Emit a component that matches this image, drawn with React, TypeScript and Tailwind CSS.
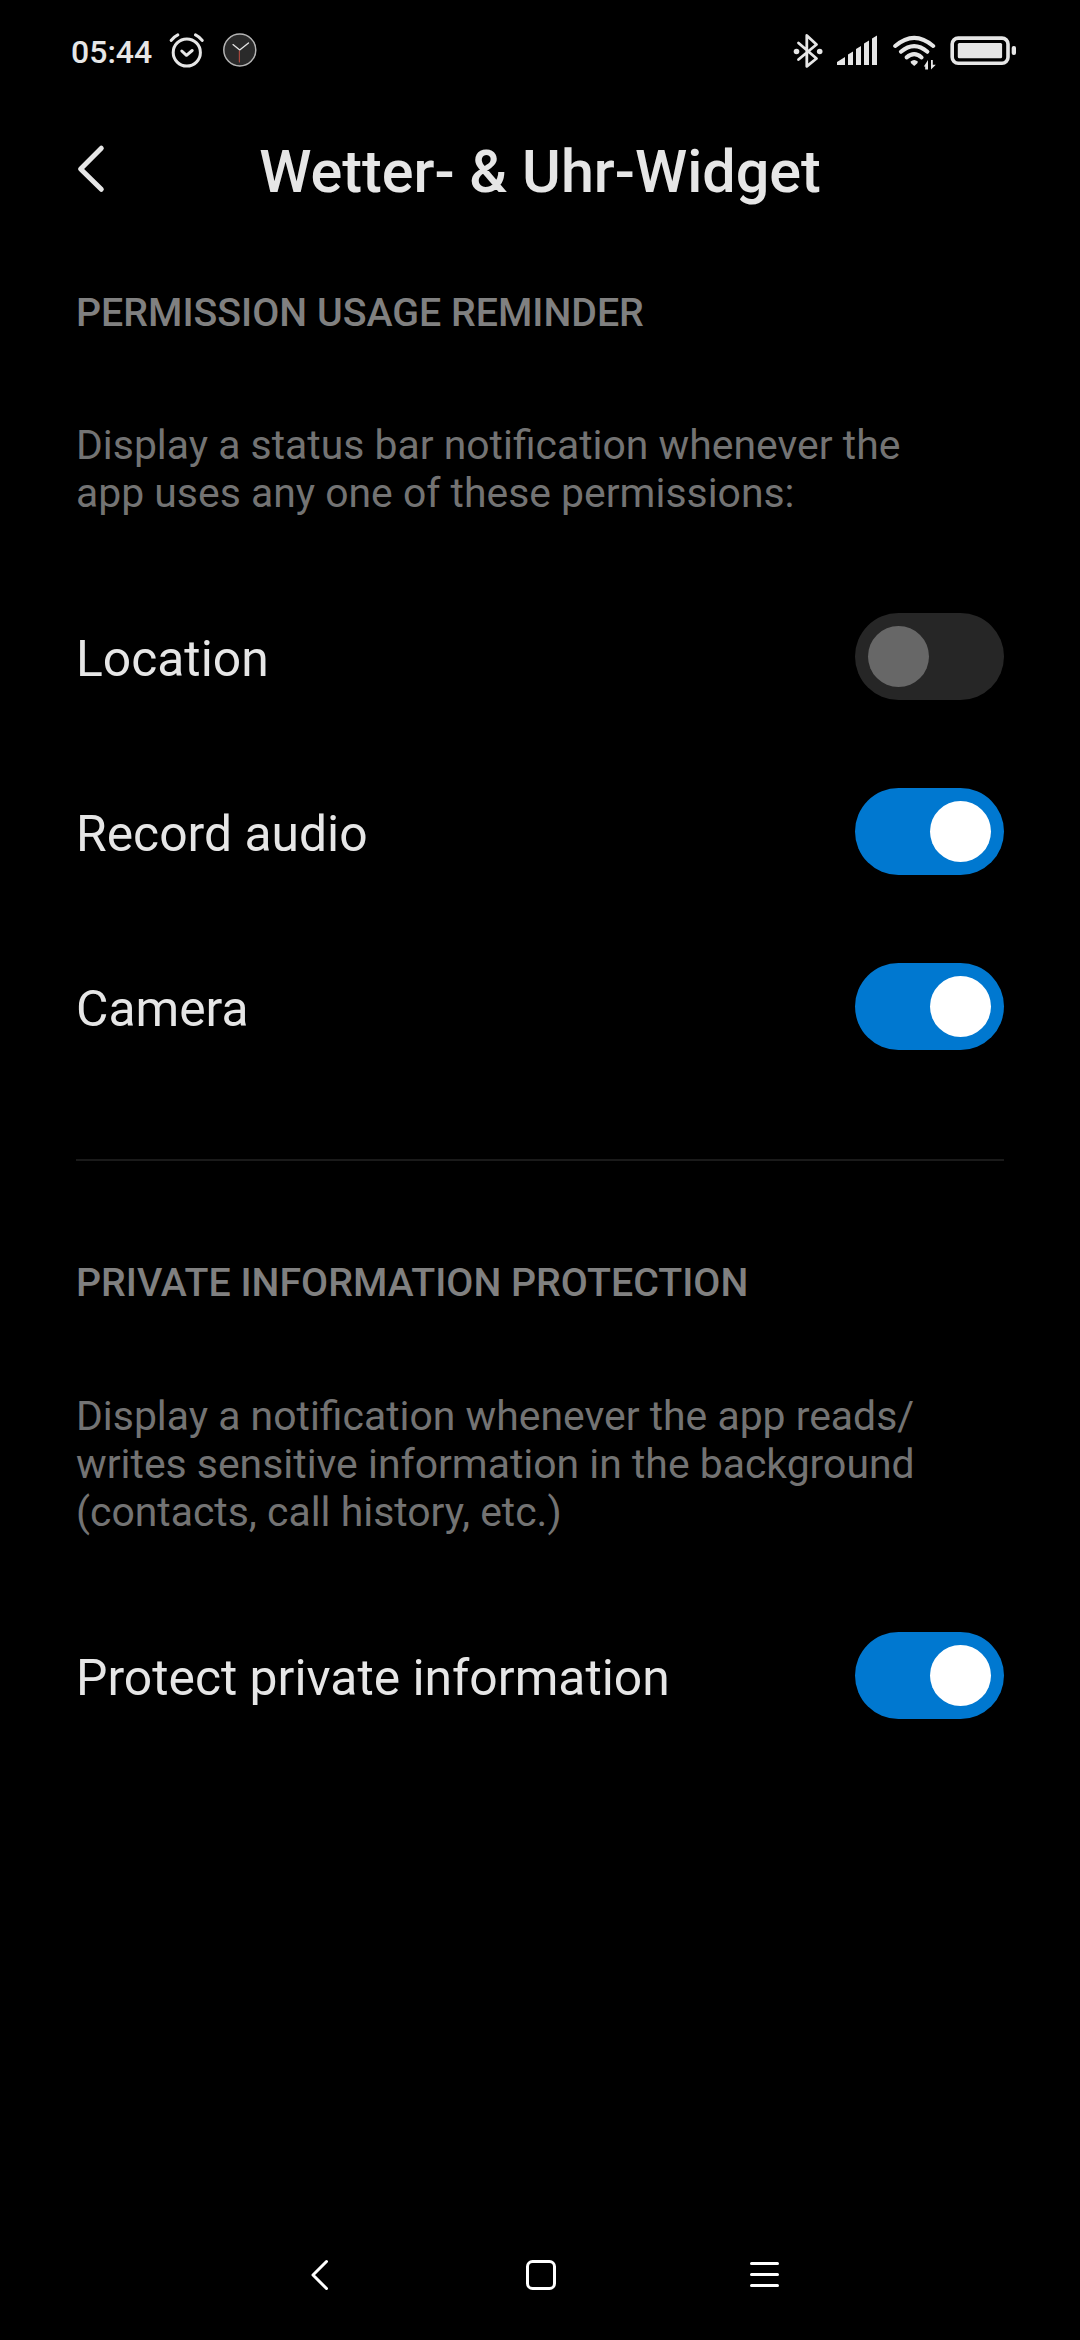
import { useState } from "react";

function StatusBar() {
  return (
    <div className="flex h-[100px] items-center justify-between pl-[71px] pr-[64px] text-[#e6e6e6]">
      <div className="flex items-center">
        <span className="w-[97px] text-[32px] leading-[38px] font-medium mt-[3px]">05:44</span>
        {/* alarm */}
        <svg className="h-[36px] w-[36px]" viewBox="0 0 36 36" fill="none" stroke="currentColor" strokeLinecap="round" strokeLinejoin="round">
          <circle cx="18.8" cy="20.5" r="13.6" strokeWidth="3" />
          <path d="M13.8 19L18.5 23.3L24.2 18.5" strokeWidth="3" />
          <path d="M3.2 8.4Q5.5 4.9 9.8 2.8M27.5 2.8Q31.8 4.9 34.2 8.4" strokeWidth="3" />
        </svg>
        {/* clock widget */}
        <svg className="ml-[18px] h-[36px] w-[36px]" viewBox="0 0 36 36" fill="none" strokeLinecap="round">
          <circle cx="17.8" cy="18" r="16" fill="#2a2a2a" stroke="#b4b4b4" strokeWidth="1.5" />
          <path d="M17.7 18L11 12.6M17.7 18L26.5 11" stroke="#e6e6e6" strokeWidth="1.3" />
          <path d="M17.4 19V30" stroke="#a5453c" strokeWidth="1.2" />
        </svg>
      </div>
      <svg className="h-[40px] w-[226px]" viewBox="790 30 226 40" fill="currentColor">
        {/* bluetooth */}
        <path d="M798.5 43L816.5 58.5L806.8 66.3V35.5L816.5 44.5L798.5 59.5" fill="none" stroke="currentColor" strokeWidth="2.8" strokeLinejoin="round" strokeLinecap="round" />
        <circle cx="796.5" cy="51.5" r="2.8" />
        <circle cx="819.7" cy="51.5" r="2.8" />
        {/* signal */}
        <path d="M837 62L845 57V65H837ZM848 54.5L853 51.5V65H848ZM856 49L861 46V65H856ZM864 43.5L869 40.5V65H864ZM872 38.5L877 35.5V65H872Z" />
        {/* wifi */}
        <g fill="none" stroke="currentColor" strokeWidth="4" strokeLinecap="round">
          <path d="M895.2 46Q914.2 29.6 933.2 46" />
          <path d="M900.9 51.8Q914.2 40.3 927.4 51.8" />
          <path d="M906.6 57.4Q914.2 51 921.6 57.4" />
        </g>
        <path d="M910.6 61.5Q914.2 58.5 917.8 61.5Q918.2 63 914.2 66Q910.2 63 910.6 61.5Z" />
        <path d="M928 60V69.5H925.2V66.5H923.8ZM931 69.5V60H932.8V64.8H935.8Z" />
        {/* battery */}
        <rect x="952.2" y="38.1" width="55.8" height="25.2" rx="6" fill="none" stroke="currentColor" strokeWidth="3.6" />
        <rect x="957.8" y="43" width="44.3" height="15.2" rx="1.5" />
        <rect x="1011.7" y="46" width="4.3" height="9" rx="2" />
      </svg>
    </div>
  );
}

function Switch({ on, onChange }: { on: boolean; onChange: () => void }) {
  return (
    <button
      role="switch"
      aria-checked={on}
      onClick={onChange}
      className={`flex h-[87px] w-[149px] items-center rounded-full px-[13px] ${on ? "justify-end bg-[#0078d0]" : "justify-start bg-[#262626]"}`}
    >
      <span className={`h-[61px] w-[61px] rounded-full ${on ? "bg-white" : "bg-[#676767]"}`} />
    </button>
  );
}

function SettingRow({ label, defaultOn = false }: { label: string; defaultOn?: boolean }) {
  const [on, setOn] = useState(defaultOn);

  return (
    <div className="flex h-[175px] items-center justify-between">
      <span className="mt-[5px] text-[49.8px] leading-[60px] text-[#e6e6e6]">{label}</span>
      <Switch on={on} onChange={() => setOn(!on)} />
    </div>
  );
}

function SectionTitle({ children }: { children: string }) {
  return <h2 className="text-[39.3px] leading-[48px] font-medium text-[#808080]">{children}</h2>;
}

export default function App() {
  return (
    <div className="flex h-[2340px] w-[1080px] flex-col bg-black font-[Roboto,sans-serif]">
      <StatusBar />

      {/* Title bar */}
      <header className="flex h-[140px] items-center pl-[76px] pr-[75px]">
        <svg className="-mt-[3px] h-[50px] w-[30px]" viewBox="0 0 30 50" fill="none" stroke="#e6e6e6" strokeWidth="5" strokeLinecap="round" strokeLinejoin="round">
          <path d="M25.3 4.2L4.6 25L25.3 45.3" />
        </svg>
        <h1 className="mt-[4px] flex-1 pr-[31px] text-center text-[59.3px] leading-[70px] font-medium text-[#e6e6e6]">Wetter- &amp; Uhr-Widget</h1>
      </header>

      <main className="flex-1 px-[76px]">
        <section className="pt-[49px]">
          <SectionTitle>PERMISSION USAGE REMINDER</SectionTitle>
          <p className="mt-[84px] text-[40.9px] leading-[48px] text-[#737373]">
            Display a status bar notification whenever the
            <br />
            app uses any one of these permissions:
          </p>
          <div className="mt-[52px]">
            <SettingRow label="Location" />
            <SettingRow label="Record audio" defaultOn />
            <SettingRow label="Camera" defaultOn />
          </div>
        </section>

        <div className="mt-[65px] h-[2px] bg-[#1a1a1a]" />

        <section className="pt-[98px]">
          <SectionTitle>PRIVATE INFORMATION PROTECTION</SectionTitle>
          <p className="mt-[85px] text-[40.9px] leading-[48px] text-[#737373]">
            Display a notification whenever the app reads/
            <br />
            writes sensitive information in the background
            <br />
            (contacts, call history, etc.)
          </p>
          <div className="mt-[52px]">
            <SettingRow label="Protect private information" defaultOn />
          </div>
        </section>
      </main>

      {/* Navigation bar */}
      <nav className="flex h-[130px] items-center justify-center text-white">
        <svg className="h-[36px] w-[480px]" viewBox="300 2257 480 36" fill="none" stroke="currentColor" strokeWidth="3" strokeLinecap="round" strokeLinejoin="round">
          <path d="M326.5 2261.5L313 2275L326.5 2288.5" />
          <rect x="527.5" y="2261.5" width="27" height="27" rx="5" />
          <path d="M751.5 2263.5H777.5M751.5 2274.5H777.5M751.5 2285.5H777.5" />
        </svg>
      </nav>
    </div>
  );
}
